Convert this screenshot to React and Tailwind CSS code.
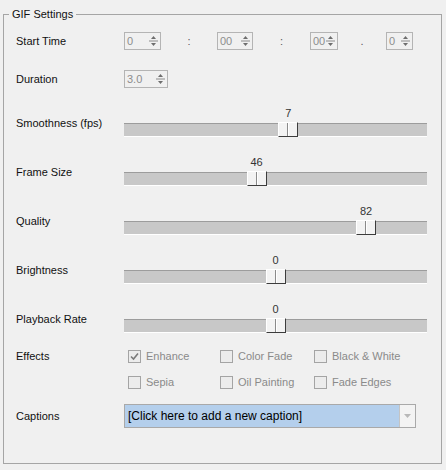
import React from 'react';

const font = { fontFamily: '"Liberation Sans", Arial, sans-serif' };

// small up/down arrow pair used by the numeric spinners
const SpinArrows = () => (
  <svg width="9" height="14" viewBox="0 0 9 14" className="shrink-0">
    <path d="M4.5 2 L7 5 L2 5 Z" fill="#6d6d6d" />
    <line x1="0" y1="7" x2="9" y2="7" stroke="#8a8a8a" />
    <path d="M2 9 L7 9 L4.5 12 Z" fill="#6d6d6d" />
  </svg>
);

const Spinner = ({ value, width }) => (
  <div
    className="flex items-center justify-between h-[18px] border border-[#b4b4b4] bg-[#f0f0f0] pl-[2px] pr-[2px] text-[#8d8d8d]"
    style={{ width }}
  >
    <span className="leading-[16px]">{value}</span>
    <SpinArrows />
  </div>
);

const Sep = ({ ch, width }) => (
  <div className="text-center text-[#5a5a5a]" style={{ width }}>
    {ch}
  </div>
);

const TRACK = 303;
const THUMB = 20;

const Slider = ({ value, min, max }) => {
  const left = ((value - min) / (max - min)) * (TRACK - THUMB);
  return (
    <div className="relative w-[303px] h-[30px]">
      <div
        className="absolute top-0 w-[20px] text-center leading-[13px] text-[#333]"
        style={{ left }}
      >
        {value}
      </div>
      <div className="absolute top-[16px] left-0 right-0 h-[14px] bg-[#c8c8c8] border-t border-t-[#9c9c9c] border-b border-b-white" />
      <div
        className="absolute top-[15px] h-[15px] w-[20px] flex bg-[#f3f3f3] border-l border-t border-l-white border-t-white border-r border-b border-r-[#3c3c3c] border-b-[#3c3c3c]"
        style={{ left }}
      >
        <div className="w-[9px] border-r border-r-[#8a8a8a]" />
        <div className="w-[1px] bg-white" />
      </div>
    </div>
  );
};

const Check = ({ label, checked }) => (
  <div className="flex items-center gap-[5px] h-[13px]">
    <div className="w-[13px] h-[13px] border border-[#a4a4a4] bg-[#ececec] flex items-center justify-center">
      {checked && (
        <svg width="9" height="9" viewBox="0 0 9 9">
          <path d="M1 4.5 L3.5 7 L8 1.5" fill="none" stroke="#7a7a7a" strokeWidth="1.6" />
        </svg>
      )}
    </div>
    <span className="text-[#8a8a8a] leading-[13px]">{label}</span>
  </div>
);

const sliders = [
  { label: 'Smoothness (fps)', value: 7, min: 1, max: 12 },
  { label: 'Frame Size', value: 46, min: 20, max: 80 },
  { label: 'Quality', value: 82, min: 0, max: 100 },
  { label: 'Brightness', value: 0, min: -100, max: 100 },
  { label: 'Playback Rate', value: 0, min: -4, max: 4 },
];

export default function App() {
  return (
    <div className="w-[446px] h-[470px] bg-[#f0f0f0] text-[11px] text-[#111] overflow-hidden" style={font}>
      <fieldset className="ml-[3px] mt-[7px] w-[439px] h-[457px] border border-[#a5a5a5] p-0 m-0">
        <legend className="ml-[5px] px-[3px] leading-[14px] text-[#111]">GIF Settings</legend>

        <div className="flex flex-col pl-[12px]">
          {/* start time */}
          <div className="flex items-center h-[18px] mt-[11px]">
            <div className="w-[108px]">Start Time</div>
            <Spinner value="0" width={37} />
            <Sep ch=":" width={56} />
            <Spinner value="00" width={36} />
            <Sep ch=":" width={57} />
            <Spinner value="00" width={28} />
            <Sep ch="." width={48} />
            <Spinner value="0" width={27} />
          </div>

          {/* duration */}
          <div className="flex items-center h-[18px] mt-[20px]">
            <div className="w-[108px]">Duration</div>
            <Spinner value="3.0" width={44} />
          </div>

          {sliders.map((s) => (
            <div key={s.label} className="flex items-start h-[30px] mt-[19px]">
              <div className="w-[108px] mt-[10px] leading-[13px]">{s.label}</div>
              <Slider value={s.value} min={s.min} max={s.max} />
            </div>
          ))}

          {/* effects */}
          <div className="flex items-start mt-[17px]">
            <div className="w-[108px] leading-[13px]">Effects</div>
            <div className="pl-[4px] grid grid-cols-[92px_94px_auto] gap-y-[13px]">
              <Check label="Enhance" checked />
              <Check label="Color Fade" />
              <Check label="Black & White" />
              <Check label="Sepia" />
              <Check label="Oil Painting" />
              <Check label="Fade Edges" />
            </div>
          </div>

          {/* captions */}
          <div className="flex items-center mt-[15px] h-[24px]">
            <div className="w-[108px]">Captions</div>
            <div className="flex w-[292px] h-[24px] border border-[#a9a9a9] bg-[#b4cfec]">
              <div className="flex-1 pl-[3px] text-[12px] leading-[22px] text-black">
                [Click here to add a new caption]
              </div>
              <div className="w-[16px] bg-[#f3f3f3] border-l border-l-[#c4c4c4] flex items-center justify-center">
                <svg width="7" height="4" viewBox="0 0 7 4">
                  <path d="M0 0 L7 0 L3.5 4 Z" fill="#b8b8b8" />
                </svg>
              </div>
            </div>
          </div>
        </div>
      </fieldset>
    </div>
  );
}
